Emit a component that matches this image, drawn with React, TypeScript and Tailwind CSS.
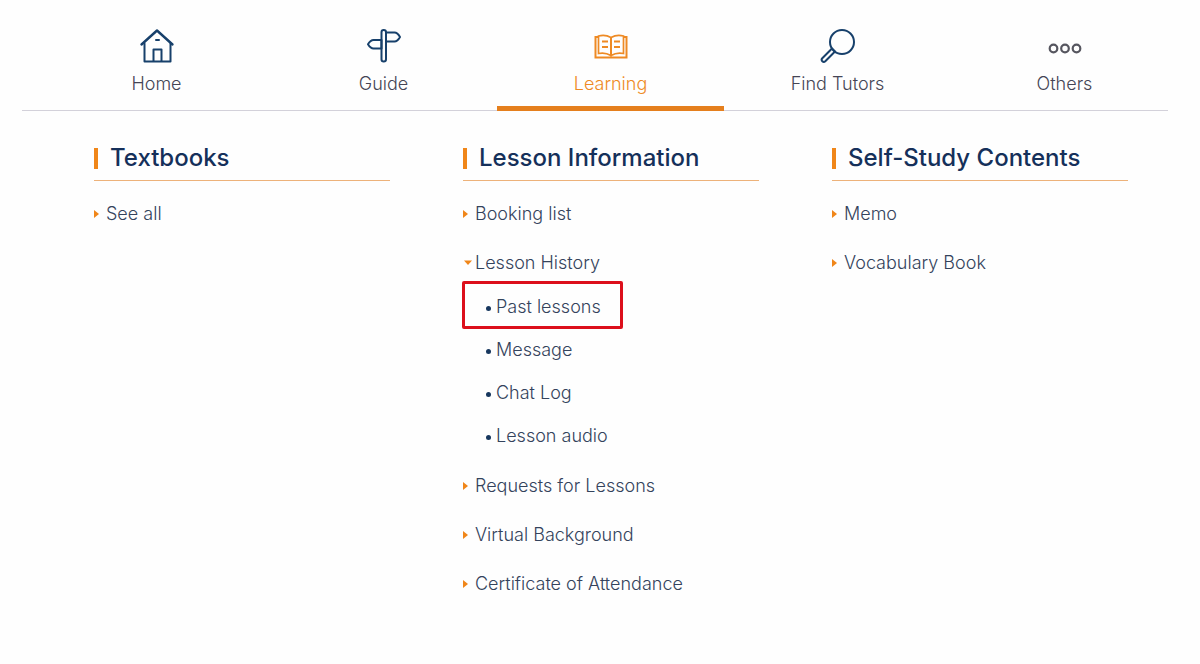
import { useState } from 'react';
import clsx from 'clsx';

const HomeIcon = () => (
  <svg width="36" height="36" viewBox="0 0 36 36" fill="none" stroke="currentColor" strokeWidth="2" strokeLinejoin="round" strokeLinecap="round">
    <path d="M5.500 15.500V33.500h26V15.500" />
    <path d="M2.500 16.500 18 2.500 33.500 16.500" strokeWidth="2.400" />
    <path d="M14.500 33V21.500h8v11.500M17 12h3" />
  </svg>
);

const GuideIcon = () => (
  <svg width="36" height="36" viewBox="0 0 36 36" fill="none" stroke="currentColor" strokeWidth="2" strokeLinejoin="round">
    <rect x="15.500" y="2" width="4.500" height="31.500" rx="2.200" />
    <path d="M20 4.500H28.500q3 0 5.500 4.500-2.500 4.500-5.500 4.500H20z" />
    <path d="M15.500 12H7.500Q4.500 12 2 16.200 4.500 20.500 7.500 20.500h8z" />
  </svg>
);

const BookIcon = () => (
  <svg width="36" height="36" viewBox="0 0 36 36" fill="none" stroke="currentColor" strokeWidth="2">
    <path d="M5.500 9H2.500v20.500h31V9h-3" />
    <path d="M18 9.500Q12 6 5.500 8V25.500Q12 24 18 27.500 24 24 30.500 25.500V8Q24 6 18 9.500z" strokeWidth="1.700" />
    <path d="M18 9.500v19" strokeWidth="2" />
    <path d="M9 13.500h6M9 19h6M21 13.500h6M21 19h6" strokeWidth="1.900" />
  </svg>
);

const SearchIcon = () => (
  <svg width="36" height="36" viewBox="0 0 36 36" fill="none" stroke="currentColor" strokeWidth="2" strokeLinejoin="round">
    <circle cx="22" cy="14" r="12" />
    <path d="M12 20.500 2.300 30.200a2.200 2.200 0 0 0 0 3 2.200 2.200 0 0 0 3 0L15 23.500z" />
  </svg>
);

const OthersIcon = () => (
  <svg width="36" height="36" viewBox="0 0 36 36" fill="none" stroke="#56565f" strokeWidth="2.200">
    <circle cx="6.500" cy="20.500" r="3.800" />
    <circle cx="18" cy="20.500" r="3.800" />
    <circle cx="29.500" cy="20.500" r="3.800" />
  </svg>
);

const tabs = [
  { label: 'Home', icon: HomeIcon },
  { label: 'Guide', icon: GuideIcon },
  { label: 'Learning', icon: BookIcon, active: true },
  { label: 'Find Tutors', icon: SearchIcon },
  { label: 'Others', icon: OthersIcon },
];

type MenuItem = { label: string; children?: string[] };

const sections: { title: string; items: MenuItem[] }[] = [
  { title: 'Textbooks', items: [{ label: 'See all' }] },
  {
    title: 'Lesson Information',
    items: [
      { label: 'Booking list' },
      { label: 'Lesson History', children: ['Past lessons', 'Message', 'Chat Log', 'Lesson audio'] },
      { label: 'Requests for Lessons' },
      { label: 'Virtual Background' },
      { label: 'Certificate of Attendance' },
    ],
  },
  { title: 'Self-Study Contents', items: [{ label: 'Memo' }, { label: 'Vocabulary Book' }] },
];

function Arrow({ open = false }: { open?: boolean }) {
  return (
    <svg width="12" height="12" viewBox="0 0 12 12" fill="#f08619" className="shrink-0">
      {open ? <path d="M1 3.500h8L5 8z" /> : <path d="M0 2l5 4-5 4z" />}
    </svg>
  );
}

function SubMenu({ items, selected }: { items: string[]; selected: string }) {
  return (
    <ul className="flex flex-col gap-[19px] pt-5 pb-px pl-[23px]">
      {items.map((label) => (
        <li key={label} className="relative flex">
          <a href="#" className="flex items-center gap-[5px] whitespace-nowrap">
            <span className="mt-0.5 size-[5px] rounded-full bg-[#17375e]" />
            {label}
          </a>
          {label === selected && (
            <span className="pointer-events-none absolute -top-3.5 -left-6 h-12 w-[161px] rounded-xs border-3 border-[#dc0f1b]" />
          )}
        </li>
      ))}
    </ul>
  );
}

export default function App() {
  const [historyOpen, setHistoryOpen] = useState(true);

  return (
    <div className="min-h-screen bg-[#fefefe] font-['Inter','Liberation_Sans',sans-serif] text-lg leading-6 font-light text-[#34435c]">
      <nav className="mr-8 ml-[22px] border-b border-[#d3d1da]">
        <ul className="-mr-2.5 -mb-px ml-[21px] grid grid-cols-5">
          {tabs.map(({ label, icon: Icon, active }) => (
            <li key={label}>
              <a
                href="#"
                className={clsx(
                  'flex h-[111px] flex-col items-center gap-2 border-b-5 pt-7',
                  active ? 'border-[#e57f1d] text-[#ee8a24]' : 'border-transparent text-[#17406b]',
                )}
              >
                <Icon />
                <span className={clsx(!active && 'text-[#454555]')}>{label}</span>
              </a>
            </li>
          ))}
        </ul>
      </nav>

      <main className="grid grid-cols-3 gap-[73px] pt-[35px] pr-[72px] pb-12 pl-[94px]">
        {sections.map((section) => (
          <section key={section.title}>
            <h2 className="flex items-center gap-3 border-b border-[#edb27a] pb-2.5 text-2xl leading-6 font-medium whitespace-nowrap text-[#15305a]">
              <span className="h-[21px] w-1 bg-[#f08619]" />
              {section.title}
            </h2>
            <ul className="flex flex-col gap-[25px] pt-[21px]">
              {section.items.map((item) => (
                <li key={item.label}>
                  {item.children ? (
                    <button
                      type="button"
                      aria-expanded={historyOpen}
                      onClick={() => setHistoryOpen(!historyOpen)}
                      className="flex cursor-pointer items-center whitespace-nowrap"
                    >
                      <Arrow open={historyOpen} />
                      {item.label}
                    </button>
                  ) : (
                    <a href="#" className="flex items-center whitespace-nowrap">
                      <Arrow />
                      {item.label}
                    </a>
                  )}
                  {item.children && historyOpen && <SubMenu items={item.children} selected="Past lessons" />}
                </li>
              ))}
            </ul>
          </section>
        ))}
      </main>
    </div>
  );
}
